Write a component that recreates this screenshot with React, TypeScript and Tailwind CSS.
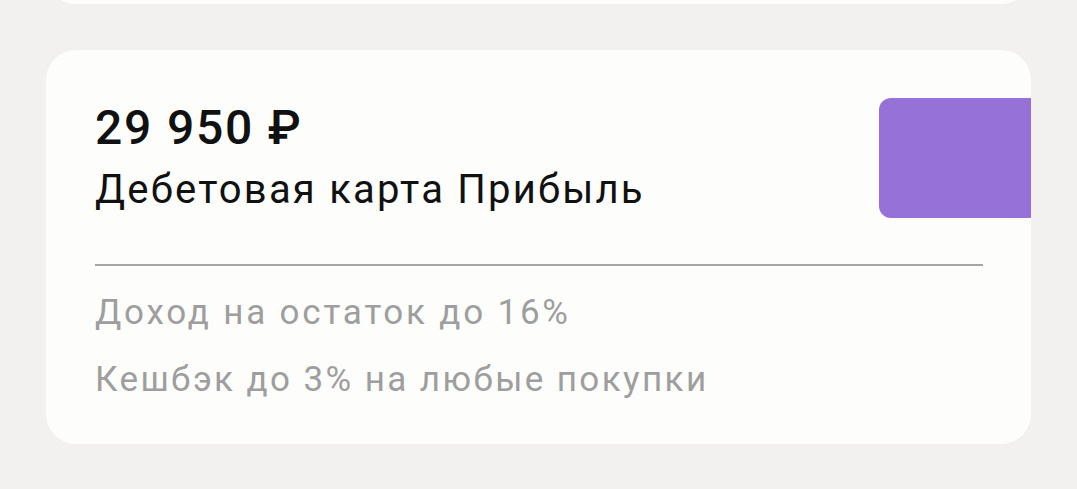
export default function App() {
  return (
    <div className="min-h-[489px] overflow-hidden bg-[#f2f1f0] font-['Roboto',sans-serif]">
      {/* bottom edge of the previous card */}
      <div className="mx-[46px] -mt-[56px] h-[60px] rounded-[30px] bg-[#fdfdfb]" />

      <div className="mx-[46px] mt-[46px] h-[394px] overflow-hidden rounded-[30px] bg-[#fdfdfb]">
        <div className="flex justify-between">
          <div className="pl-[49px] pt-[51px]">
            <div className="text-[48px] font-medium leading-[54px] tracking-[1.8px] text-[#111111]">29 950 ₽</div>
            <div className="mt-[11px] text-[40px] leading-[48px] tracking-[2.2px] text-[#111111]">Дебетовая карта Прибыль</div>
          </div>
          <div className="mt-[48px] h-[120px] w-[152px] shrink-0 rounded-l-[12px] bg-[#9671d8]" />
        </div>

        <div className="ml-[49px] mt-[46px] h-[2px] w-[888px] bg-[#a6a6a6]" />

        <div className="pl-[49px]">
          <div className="mt-[25px] text-[35px] leading-[44px] tracking-[2.8px] text-[#9e9e9e]">Доход на остаток до 16%</div>
          <div className="mt-[23px] text-[35px] leading-[44px] tracking-[2.4px] text-[#9e9e9e]">Кешбэк до 3% на любые покупки</div>
        </div>
      </div>
    </div>
  );
}
